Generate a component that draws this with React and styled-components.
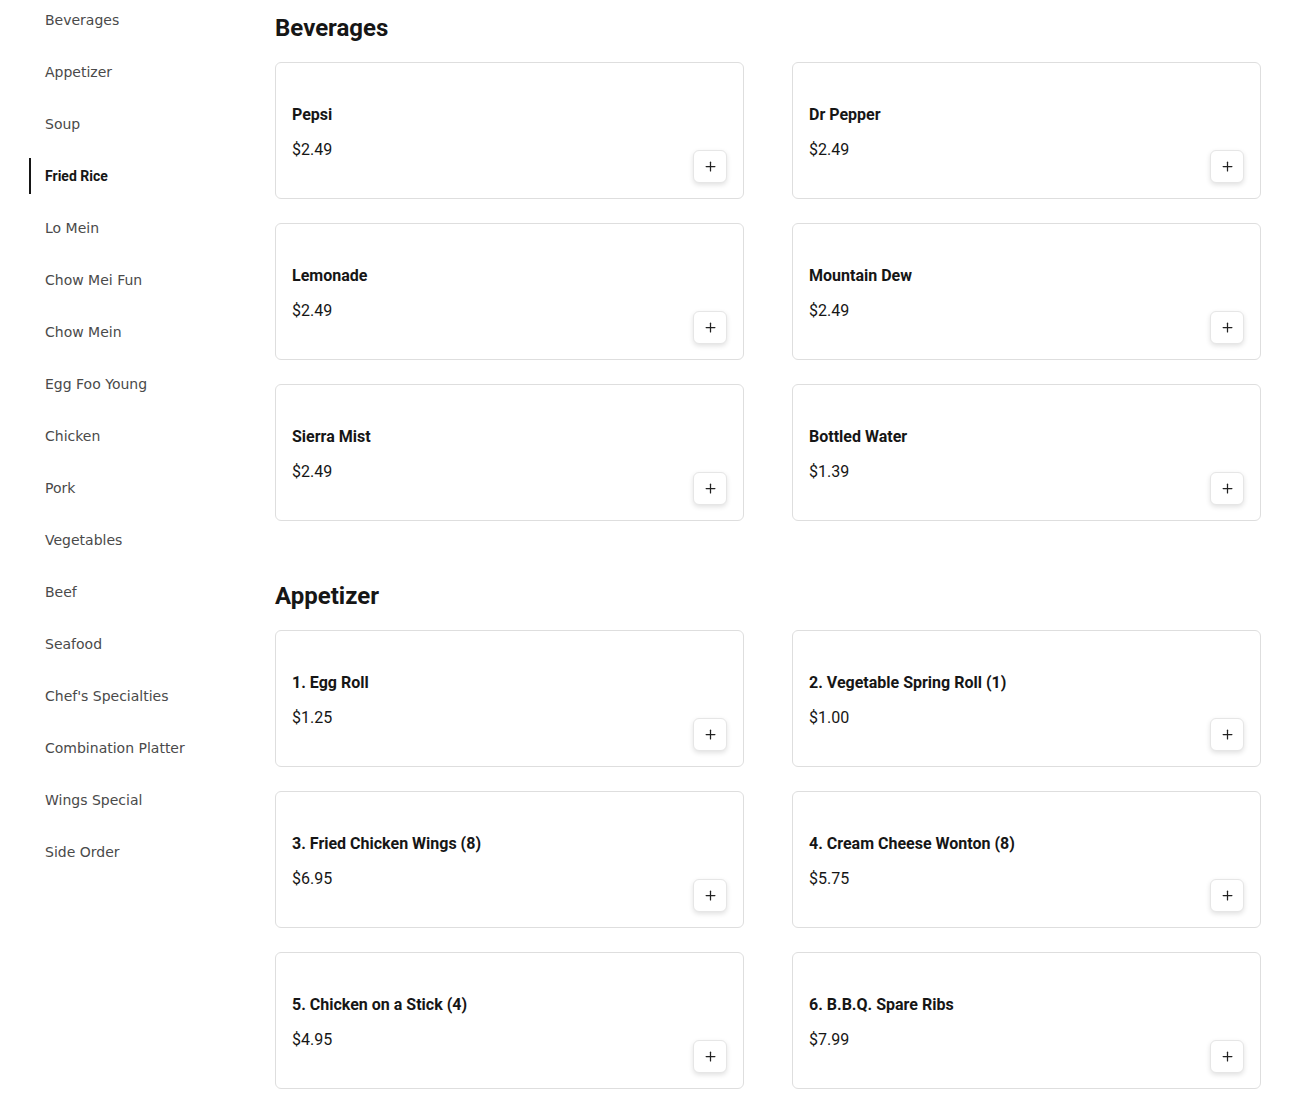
import React from "react";
import styled, { createGlobalStyle } from "styled-components";
import { Plus } from "lucide-react";

const GlobalStyle = createGlobalStyle`
  body {
    margin: 0;
    background: #fff;
    font-family: Roboto, "Liberation Sans", sans-serif;
    color: #161616;
  }
`;

const Page = styled.div`
  display: flex;
  gap: 32px;
  padding: 0 29px;
  width: 1290px;
  box-sizing: border-box;
`;

const Sidebar = styled.nav`
  width: 214px;
  flex-shrink: 0;
  display: flex;
  flex-direction: column;
  gap: 16px;
  padding-top: 2px;
`;

const NavItem = styled.a`
  display: flex;
  align-items: center;
  height: 36px;
  padding-left: 14px;
  border-left: 2px solid ${(p) => (p.$active ? "#161616" : "transparent")};
  font-family: ${(p) =>
    p.$active ? 'Roboto, "Liberation Sans", sans-serif' : '"DejaVu Sans", sans-serif'};
  font-weight: ${(p) => (p.$active ? 700 : 400)};
  font-size: 14px;
  color: ${(p) => (p.$active ? "#161616" : "#4a4a4a")};
  text-decoration: none;
  cursor: pointer;
`;

const Main = styled.main`
  flex: 1;
  padding-top: 12px;
`;

const Section = styled.section`
  margin-bottom: 59px;
`;

const Heading = styled.h2`
  margin: 0 0 18px;
  font-size: 24px;
  line-height: 32px;
  font-weight: 700;
  color: #161616;
`;

const Grid = styled.div`
  display: grid;
  grid-template-columns: 1fr 1fr;
  column-gap: 48px;
  row-gap: 24px;
`;

const Card = styled.div`
  display: flex;
  justify-content: space-between;
  min-height: 137px;
  box-sizing: border-box;
  padding: 16px 16px 15px;
  border: 1px solid #dedede;
  border-radius: 6px;
  background: #fff;
`;

const Info = styled.div`
  display: flex;
  flex-direction: column;
  gap: 11px;
  padding-top: 24px;
`;

const Name = styled.div`
  font-size: 16px;
  line-height: 24px;
  font-weight: 700;
`;

const Price = styled.div`
  font-size: 16px;
  line-height: 24px;
  font-weight: 400;
`;

const AddButton = styled.button`
  align-self: flex-end;
  width: 34px;
  height: 33px;
  display: flex;
  align-items: center;
  justify-content: center;
  padding: 0;
  border: 1px solid #e6e6e6;
  border-radius: 6px;
  background: #fff;
  color: #222;
  box-shadow: 0 2px 5px rgba(0, 0, 0, 0.12);
  cursor: pointer;
`;

const categories = [
  "Beverages",
  "Appetizer",
  "Soup",
  "Fried Rice",
  "Lo Mein",
  "Chow Mei Fun",
  "Chow Mein",
  "Egg Foo Young",
  "Chicken",
  "Pork",
  "Vegetables",
  "Beef",
  "Seafood",
  "Chef's Specialties",
  "Combination Platter",
  "Wings Special",
  "Side Order",
];

const menu = [
  {
    title: "Beverages",
    items: [
      ["Pepsi", "$2.49"],
      ["Dr Pepper", "$2.49"],
      ["Lemonade", "$2.49"],
      ["Mountain Dew", "$2.49"],
      ["Sierra Mist", "$2.49"],
      ["Bottled Water", "$1.39"],
    ],
  },
  {
    title: "Appetizer",
    items: [
      ["1. Egg Roll", "$1.25"],
      ["2. Vegetable Spring Roll (1)", "$1.00"],
      ["3. Fried Chicken Wings (8)", "$6.95"],
      ["4. Cream Cheese Wonton (8)", "$5.75"],
      ["5. Chicken on a Stick (4)", "$4.95"],
      ["6. B.B.Q. Spare Ribs", "$7.99"],
    ],
  },
];

export default function App() {
  return (
    <>
      <GlobalStyle />
      <Page>
        <Sidebar>
          {categories.map((c) => (
            <NavItem key={c} $active={c === "Fried Rice"}>
              {c}
            </NavItem>
          ))}
        </Sidebar>
        <Main>
          {menu.map((section) => (
            <Section key={section.title}>
              <Heading>{section.title}</Heading>
              <Grid>
                {section.items.map(([name, price]) => (
                  <Card key={name}>
                    <Info>
                      <Name>{name}</Name>
                      <Price>{price}</Price>
                    </Info>
                    <AddButton aria-label={`Add ${name}`}>
                      <Plus size={15} strokeWidth={2} />
                    </AddButton>
                  </Card>
                ))}
              </Grid>
            </Section>
          ))}
        </Main>
      </Page>
    </>
  );
}
